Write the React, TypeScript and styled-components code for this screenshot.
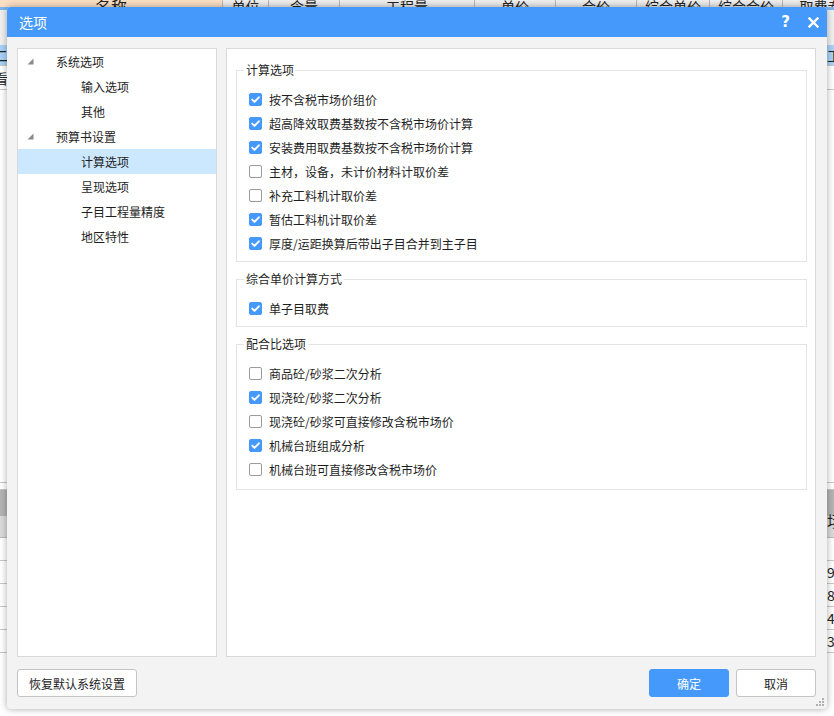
import React from "react";
import styled, { createGlobalStyle } from "styled-components";

const BLUE = "#4499fa";
const UI_FONT = `"Noto Sans CJK SC", "Noto Sans", sans-serif`;

const GlobalStyle = createGlobalStyle`
  html, body { margin: 0; padding: 0; background: #ffffff; }
  body { font-family: ${UI_FONT}; }
  * { box-sizing: border-box; }
`;

/* ---------- background application (mostly hidden behind the dialog) ---------- */

const Page = styled.div`
  position: relative;
  width: 834px;
  height: 716px;
  overflow: hidden;
  background: #ffffff;
`;

const BgApp = styled.div`
  display: flex;
  flex-direction: column;
  width: 834px;
  height: 716px;
  font-family: "Noto Sans CJK SC", serif;
  color: #222;
`;

const BgHeader = styled.div`
  display: flex;
  height: 7px;
  overflow: hidden;
  flex: none;
`;

const BgHeadCell = styled.div<{ $w: number; $peach?: boolean }>`
  flex: none;
  width: ${(p) => p.$w}px;
  height: 24px;
  margin-top: -6px;
  display: flex;
  align-items: center;
  justify-content: center;
  font-size: ${(p) => (p.$peach ? 16 : 14)}px;
  background: ${(p) => (p.$peach ? "#fbdfc3" : "linear-gradient(#f4f4f4, #dedede)")};
  border-right: 1px solid #b8b8b8;
`;

const BgToolbar = styled.div`
  height: 38px;
  flex: none;
  background: #f0f0f0;
  border-top: 3px solid #7fb6ee;
`;

const BgRow = styled.div<{ $h: number; $bg?: string }>`
  height: ${(p) => p.$h}px;
  flex: none;
  display: flex;
  justify-content: space-between;
  align-items: center;
  background: ${(p) => p.$bg || "#ffffff"};
  border-bottom: 1px solid #c8c8c8;
  font-size: 14px;
`;

const BgEdgeText = styled.span<{ $right?: boolean }>`
  display: block;
  width: 8px;
  overflow: hidden;
  white-space: nowrap;
  text-align: ${(p) => (p.$right ? "left" : "right")};
  direction: ${(p) => (p.$right ? "ltr" : "rtl")};
  padding-left: ${(p) => (p.$right ? "1px" : "0")};
`;

const BgFiller = styled.div<{ $h: number }>`
  height: ${(p) => p.$h}px;
  flex: none;
  border-bottom: 1px solid #c8c8c8;
`;

const BgGridHead = styled.div`
  height: 48px;
  flex: none;
  display: flex;
  justify-content: space-between;
  align-items: center;
  padding-top: 14px;
  background: linear-gradient(#b4b4b4 0, #b4b4b4 26px, #dadada 26px);
  border-bottom: 1px solid #bcbcbc;
  font-size: 15px;
`;

/* ---------- dialog ---------- */

const Dialog = styled.div`
  position: absolute;
  left: 7px;
  top: 7px;
  width: 820px;
  height: 702px;
  display: flex;
  flex-direction: column;
  background: #f3f3f3;
  border-radius: 4px;
  box-shadow: 0 0 7px rgba(0, 0, 0, 0.35);
  overflow: hidden;
  font-family: ${UI_FONT};
`;

const TitleBar = styled.div`
  flex: none;
  height: 30px;
  display: flex;
  align-items: center;
  justify-content: space-between;
  padding: 0 8px 0 12px;
  background: ${BLUE};
  color: #ffffff;
`;

const Title = styled.div`
  font-size: 14px;
  line-height: 30px;
`;

const TitleActions = styled.div`
  display: flex;
  align-items: center;
  gap: 18px;
`;

const HelpGlyph = styled.span`
  font-family: "DejaVu Sans", sans-serif;
  font-weight: bold;
  font-size: 15px;
  line-height: 15px;
  width: 9px;
  text-align: center;
`;

const CloseIcon = styled.svg`
  display: block;
  width: 11px;
  height: 11px;
`;

const Body = styled.div`
  flex: 1;
  display: flex;
  flex-direction: column;
  padding: 11px 11px 12px 10px;
  min-height: 0;
`;

const Panels = styled.div`
  flex: 1;
  display: flex;
  gap: 9px;
  min-height: 0;
`;

const TreePanel = styled.div`
  flex: none;
  width: 200px;
  background: #ffffff;
  border: 1px solid #d9d9d9;
  display: flex;
  flex-direction: column;
`;

const TreeRow = styled.div<{ $level: number; $selected?: boolean }>`
  height: 25px;
  display: flex;
  align-items: center;
  padding-left: ${(p) => 9 + p.$level * 25}px;
  background: ${(p) => (p.$selected ? "#cce8ff" : "transparent")};
  font-size: 12px;
  color: #1e1e1e;
`;

const Toggle = styled.span`
  flex: none;
  width: 29px;
  display: flex;
  align-items: center;
`;

const ContentPanel = styled.div`
  flex: 1;
  background: #ffffff;
  border: 1px solid #d9d9d9;
  padding: 13px 8px 0 9px;
  display: flex;
  flex-direction: column;
  gap: 9px;
`;

const Group = styled.fieldset<{ $padBottom: number }>`
  margin: 0;
  padding: 9px 0 ${(p) => p.$padBottom}px 12px;
  border: 1px solid #e3e3e3;
  min-width: 0;
`;

const Legend = styled.legend`
  margin-left: -5px;
  padding: 0 2px;
  font-size: 12px;
  line-height: 16px;
  color: #1e1e1e;
`;

const OptionRow = styled.label`
  height: 24px;
  display: flex;
  align-items: center;
  gap: 7px;
  font-size: 12px;
  color: #1e1e1e;
`;

const Box = styled.span<{ $checked: boolean }>`
  flex: none;
  width: 13px;
  height: 13px;
  border-radius: 2px;
  display: flex;
  align-items: center;
  justify-content: center;
  background: ${(p) => (p.$checked ? BLUE : "#ffffff")};
  border: 1px solid ${(p) => (p.$checked ? BLUE : "#9a9a9a")};
`;

const Footer = styled.div`
  flex: none;
  margin-top: 12px;
  display: flex;
  align-items: center;
  gap: 7px;
`;

const Button = styled.button<{ $primary?: boolean; $w: number }>`
  width: ${(p) => p.$w}px;
  height: 28px;
  border-radius: 3px;
  border: 1px solid ${(p) => (p.$primary ? BLUE : "#c4c4c4")};
  background: ${(p) => (p.$primary ? BLUE : "#ffffff")};
  color: ${(p) => (p.$primary ? "#ffffff" : "#1e1e1e")};
  font-family: ${UI_FONT};
  font-size: 12px;
  padding: 0;
  cursor: pointer;
`;

const Spacer = styled.div`
  flex: 1;
`;

const Grip = styled.svg`
  position: absolute;
  right: 2px;
  bottom: 3px;
  width: 9px;
  height: 8px;
`;

const tree: { label: string; level: number; parent?: boolean; selected?: boolean }[] = [
  { label: "系统选项", level: 0, parent: true },
  { label: "输入选项", level: 1 },
  { label: "其他", level: 1 },
  { label: "预算书设置", level: 0, parent: true },
  { label: "计算选项", level: 1, selected: true },
  { label: "呈现选项", level: 1 },
  { label: "子目工程量精度", level: 1 },
  { label: "地区特性", level: 1 },
];

const groups: { title: string; padBottom: number; items: [string, boolean][] }[] = [
  {
    title: "计算选项",
    padBottom: 6,
    items: [
      ["按不含税市场价组价", true],
      ["超高降效取费基数按不含税市场价计算", true],
      ["安装费用取费基数按不含税市场价计算", true],
      ["主材，设备，未计价材料计取价差", false],
      ["补充工料机计取价差", false],
      ["暂估工料机计取价差", true],
      ["厚度/运距换算后带出子目合并到主子目", true],
    ],
  },
  {
    title: "综合单价计算方式",
    padBottom: 6,
    items: [["单子目取费", true]],
  },
  {
    title: "配合比选项",
    padBottom: 8,
    items: [
      ["商品砼/砂浆二次分析", false],
      ["现浇砼/砂浆二次分析", true],
      ["现浇砼/砂浆可直接修改含税市场价", false],
      ["机械台班组成分析", true],
      ["机械台班可直接修改含税市场价", false],
    ],
  },
];

const headCells: [string, number, boolean?][] = [
  ["名称", 223, true],
  ["单位", 46],
  ["含量", 71],
  ["工程量", 135],
  ["单价", 81],
  ["合价", 81],
  ["综合单价", 73],
  ["综合合价", 73],
  ["取费专业", 90],
];

function Check({ checked }: { checked: boolean }) {
  return (
    <Box $checked={checked}>
      {checked && (
        <svg width="11" height="11" viewBox="0 0 11 11">
          <path d="M2.2 5.6 L4.5 7.9 L8.9 3.3" fill="none" stroke="#ffffff" strokeWidth="1.9" strokeLinecap="round" strokeLinejoin="round" />
        </svg>
      )}
    </Box>
  );
}

export default function App() {
  return (
    <Page>
      <GlobalStyle />
      <BgApp>
        <BgHeader>
          {headCells.map(([t, w, peach]) => (
            <BgHeadCell key={t} $w={w} $peach={peach}>
              {t}
            </BgHeadCell>
          ))}
        </BgHeader>
        <BgToolbar />
        <BgRow $h={21} $bg="#a9d2f7">
          <BgEdgeText>二</BgEdgeText>
          <BgEdgeText $right>工程</BgEdgeText>
        </BgRow>
        <BgRow $h={24}>
          <BgEdgeText>看</BgEdgeText>
          <BgEdgeText $right> </BgEdgeText>
        </BgRow>
        <BgFiller $h={393} />
        <BgFiller $h={7} />
        <BgGridHead>
          <BgEdgeText> </BgEdgeText>
          <BgEdgeText $right>场</BgEdgeText>
        </BgGridHead>
        <BgRow $h={23}>
          <span />
          <span />
        </BgRow>
        {["9", "8", "4", "3"].map((d) => (
          <BgRow key={d} $h={23}>
            <BgEdgeText> </BgEdgeText>
            <BgEdgeText $right>{d}</BgEdgeText>
          </BgRow>
        ))}
      </BgApp>

      <Dialog>
        <TitleBar>
          <Title>选项</Title>
          <TitleActions>
            <HelpGlyph>?</HelpGlyph>
            <CloseIcon viewBox="0 0 11 11">
              <path d="M1.5 1.5 L9.5 9.5 M9.5 1.5 L1.5 9.5" stroke="#ffffff" strokeWidth="2.4" strokeLinecap="square" />
            </CloseIcon>
          </TitleActions>
        </TitleBar>
        <Body>
          <Panels>
            <TreePanel>
              {tree.map((n) => (
                <TreeRow key={n.label} $level={n.level} $selected={n.selected}>
                  <Toggle>
                    {n.parent && (
                      <svg width="7" height="7" viewBox="0 0 7 7">
                        <polygon points="6.5,0.5 6.5,6.5 0.5,6.5" fill="#8a8a8a" />
                      </svg>
                    )}
                  </Toggle>
                  {n.label}
                </TreeRow>
              ))}
            </TreePanel>
            <ContentPanel>
              {groups.map((g) => (
                <Group key={g.title} $padBottom={g.padBottom}>
                  <Legend>{g.title}</Legend>
                  {g.items.map(([label, checked]) => (
                    <OptionRow key={label}>
                      <Check checked={checked} />
                      {label}
                    </OptionRow>
                  ))}
                </Group>
              ))}
            </ContentPanel>
          </Panels>
          <Footer>
            <Button $w={120}>恢复默认系统设置</Button>
            <Spacer />
            <Button $w={80} $primary>
              确定
            </Button>
            <Button $w={80}>取消</Button>
          </Footer>
        </Body>
        <Grip viewBox="0 0 9 8">
          <rect x="6" y="0" width="2" height="2" fill="#b0b0b0" />
          <rect x="3" y="3" width="2" height="2" fill="#b0b0b0" />
          <rect x="6" y="3" width="2" height="2" fill="#b0b0b0" />
          <rect x="0" y="6" width="2" height="2" fill="#b0b0b0" />
          <rect x="3" y="6" width="2" height="2" fill="#b0b0b0" />
          <rect x="6" y="6" width="2" height="2" fill="#b0b0b0" />
        </Grip>
      </Dialog>
    </Page>
  );
}
